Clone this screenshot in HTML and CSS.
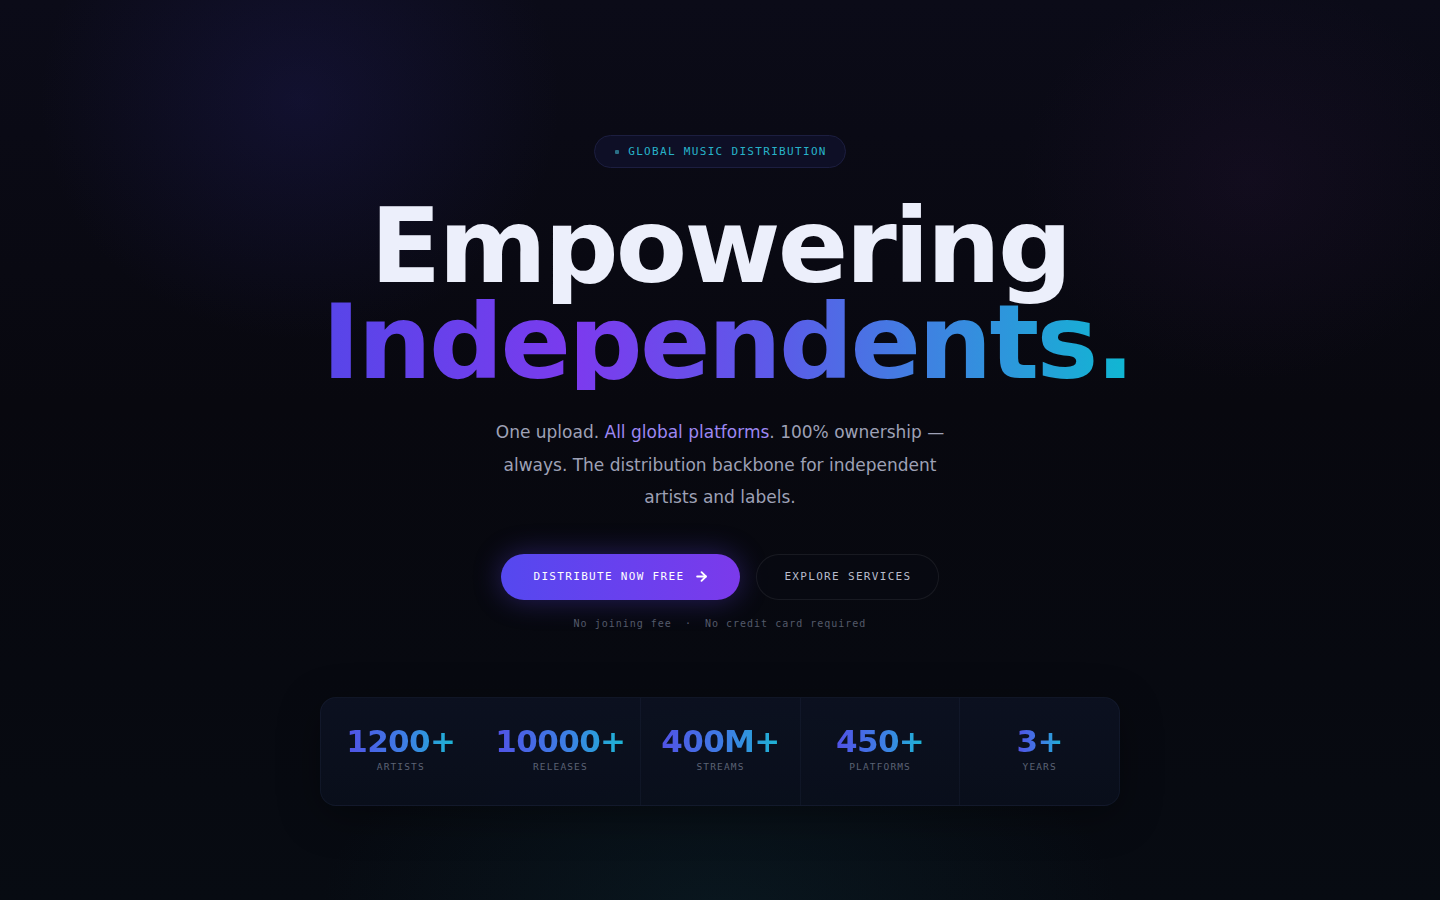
FILE: index.html
```html
<!DOCTYPE html>
<html lang="en">
<head>
<meta charset="utf-8">
<title>Empowering Independents</title>
<link rel="stylesheet" href="styles.css">
</head>
<body>
<main class="hero">
  <div class="glow glow-a"></div>
  <div class="glow glow-b"></div>
  <div class="glow glow-c"></div>
  <section class="content">
    <div class="badge"><span class="badge-dot"></span>GLOBAL MUSIC DISTRIBUTION</div>
    <h1 class="title">
      <span class="line-1">Empowering</span>
      <span class="line-2">Independents.</span>
    </h1>
    <p class="lead">One upload. <span class="hl">All global platforms</span>. 100% ownership — always. The distribution backbone for independent artists and labels.</p>
    <div class="actions">
      <a class="btn btn-primary" href="#"><span>DISTRIBUTE NOW FREE</span>
        <svg class="arrow" viewBox="0 0 24 24" width="15" height="15" fill="none" stroke="currentColor" stroke-width="3" stroke-linecap="round" stroke-linejoin="round"><path d="M5 12h14"/><path d="M12 5l7 7-7 7"/></svg>
      </a>
      <a class="btn btn-ghost" href="#">EXPLORE SERVICES</a>
    </div>
    <div class="note"><span>No joining fee</span><span class="sep">·</span><span>No credit card required</span></div>
    <div class="stats">
      <div class="stat"><div class="num">1200+</div><div class="label">ARTISTS</div></div>
      <div class="stat"><div class="num">10000+</div><div class="label">RELEASES</div></div>
      <div class="stat div"><div class="num">400M+</div><div class="label">STREAMS</div></div>
      <div class="stat div"><div class="num">450+</div><div class="label">PLATFORMS</div></div>
      <div class="stat div"><div class="num">3+</div><div class="label">YEARS</div></div>
    </div>
  </section>
</main>
</body>
</html>
```
FILE: styles.css
```css
* { box-sizing: border-box; }
html, body { margin: 0; padding: 0; }
body {
  background: #07080e;
  font-family: "DejaVu Sans", sans-serif;
  color: #e8eaf5;
  overflow: hidden;
}
.hero {
  position: relative;
  min-height: 900px;
  overflow: hidden;
  background:
    linear-gradient(180deg, #0b0b18 0%, #08080f 45%, #070910 75%, #070b12 100%);
}
.glow {
  position: absolute;
  border-radius: 50%;
  pointer-events: none;
}
.glow-a {
  left: 40px; top: -140px; width: 520px; height: 480px;
  background: radial-gradient(closest-side, rgba(40,36,120,0.26), rgba(40,36,120,0) 100%);
}
.glow-b {
  left: 1020px; top: -20px; width: 460px; height: 400px;
  background: radial-gradient(closest-side, rgba(70,30,90,0.14), rgba(70,30,90,0) 100%);
}
.glow-c {
  left: 320px; top: 700px; width: 800px; height: 420px;
  background: radial-gradient(closest-side, rgba(14,52,62,0.28), rgba(14,52,62,0) 100%);
}
.content {
  position: relative;
  display: flex;
  flex-direction: column;
  align-items: center;
  padding-top: 135px;
}
.badge {
  display: flex;
  align-items: center;
  gap: 9px;
  height: 33px;
  padding: 0 18px 0 20px;
  border-radius: 999px;
  background: #0e0f26;
  border: 1px solid #1c1e40;
  font-family: "DejaVu Sans Mono", monospace;
  font-size: 11px;
  letter-spacing: 0.12em;
  color: #27b3c9;
}
.badge-dot {
  width: 4px; height: 4px;
  border-radius: 1px;
  background: #2a6f86;
}
.title {
  margin: 31px 0 0;
  font-size: 104px;
  font-weight: 700;
  line-height: 0.92;
  letter-spacing: -0.027em;
  text-align: center;
  display: flex;
  flex-direction: column;
  align-items: center;
}
.line-1 { color: #eceffb; }
.line-2 {
  padding-left: 14px;
  background: linear-gradient(90deg, #5546e8 0%, #7b3bee 33%, #5a5de8 58%, #3a88e0 78%, #0fb8d2 100%);
  -webkit-background-clip: text;
  background-clip: text;
  color: transparent;
}
.lead {
  margin: 26px 0 0;
  width: 460px;
  font-size: 17px;
  line-height: 1.91;
  text-align: center;
  color: #9ea1b6;
}
.hl { color: #9d87f2; }
.actions {
  margin-top: 40px;
  display: flex;
  gap: 16px;
}
.btn {
  display: flex;
  align-items: center;
  justify-content: center;
  height: 46px;
  border-radius: 999px;
  font-family: "DejaVu Sans Mono", monospace;
  font-size: 11px;
  letter-spacing: 0.12em;
  text-decoration: none;
  white-space: nowrap;
}
.btn-primary {
  gap: 10px;
  padding: 0 31px 0 32px;
  color: #ffffff;
  background: linear-gradient(90deg, #5548ef 0%, #6a40ee 55%, #7b3aeb 100%);
  box-shadow: 0 0 28px rgba(98, 70, 240, 0.35);
}
.arrow { flex: none; }
.btn-ghost {
  padding: 0 26px 0 27px;
  color: #b9bdcc;
  border: 1px solid rgba(255,255,255,0.07);
  background: rgba(8,10,18,0.6);
}
.note {
  margin-top: 18px;
  display: flex;
  gap: 13px;
  font-family: "DejaVu Sans Mono", monospace;
  font-size: 10px;
  letter-spacing: 0.1em;
  color: #545a6a;
}
.stats {
  margin-top: 68px;
  width: 800px;
  height: 109px;
  display: grid;
  grid-template-columns: repeat(5, 1fr);
  border-radius: 16px;
  background: linear-gradient(180deg, rgba(13, 19, 36, 0.8), rgba(10, 15, 29, 0.8));
  border: 1px solid rgba(120,140,200,0.07);
  box-shadow: 0 10px 40px rgba(0,0,0,0.35);
  overflow: hidden;
}
.stat {
  display: flex;
  flex-direction: column;
  align-items: center;
  justify-content: center;
  gap: 4px;
  padding-bottom: 5px;
}
.stat.div { border-left: 1px solid rgba(120,140,200,0.06); }
.num {
  font-size: 31px;
  font-weight: 700;
  letter-spacing: -0.02em;
  line-height: 1;
  background: linear-gradient(90deg, #5152e6 0%, #3d7fe4 55%, #1db6d4 100%);
  -webkit-background-clip: text;
  background-clip: text;
  color: transparent;
}
.label {
  font-family: "DejaVu Sans Mono", monospace;
  font-size: 9.5px;
  letter-spacing: 0.12em;
  color: #5b6274;
}
```
